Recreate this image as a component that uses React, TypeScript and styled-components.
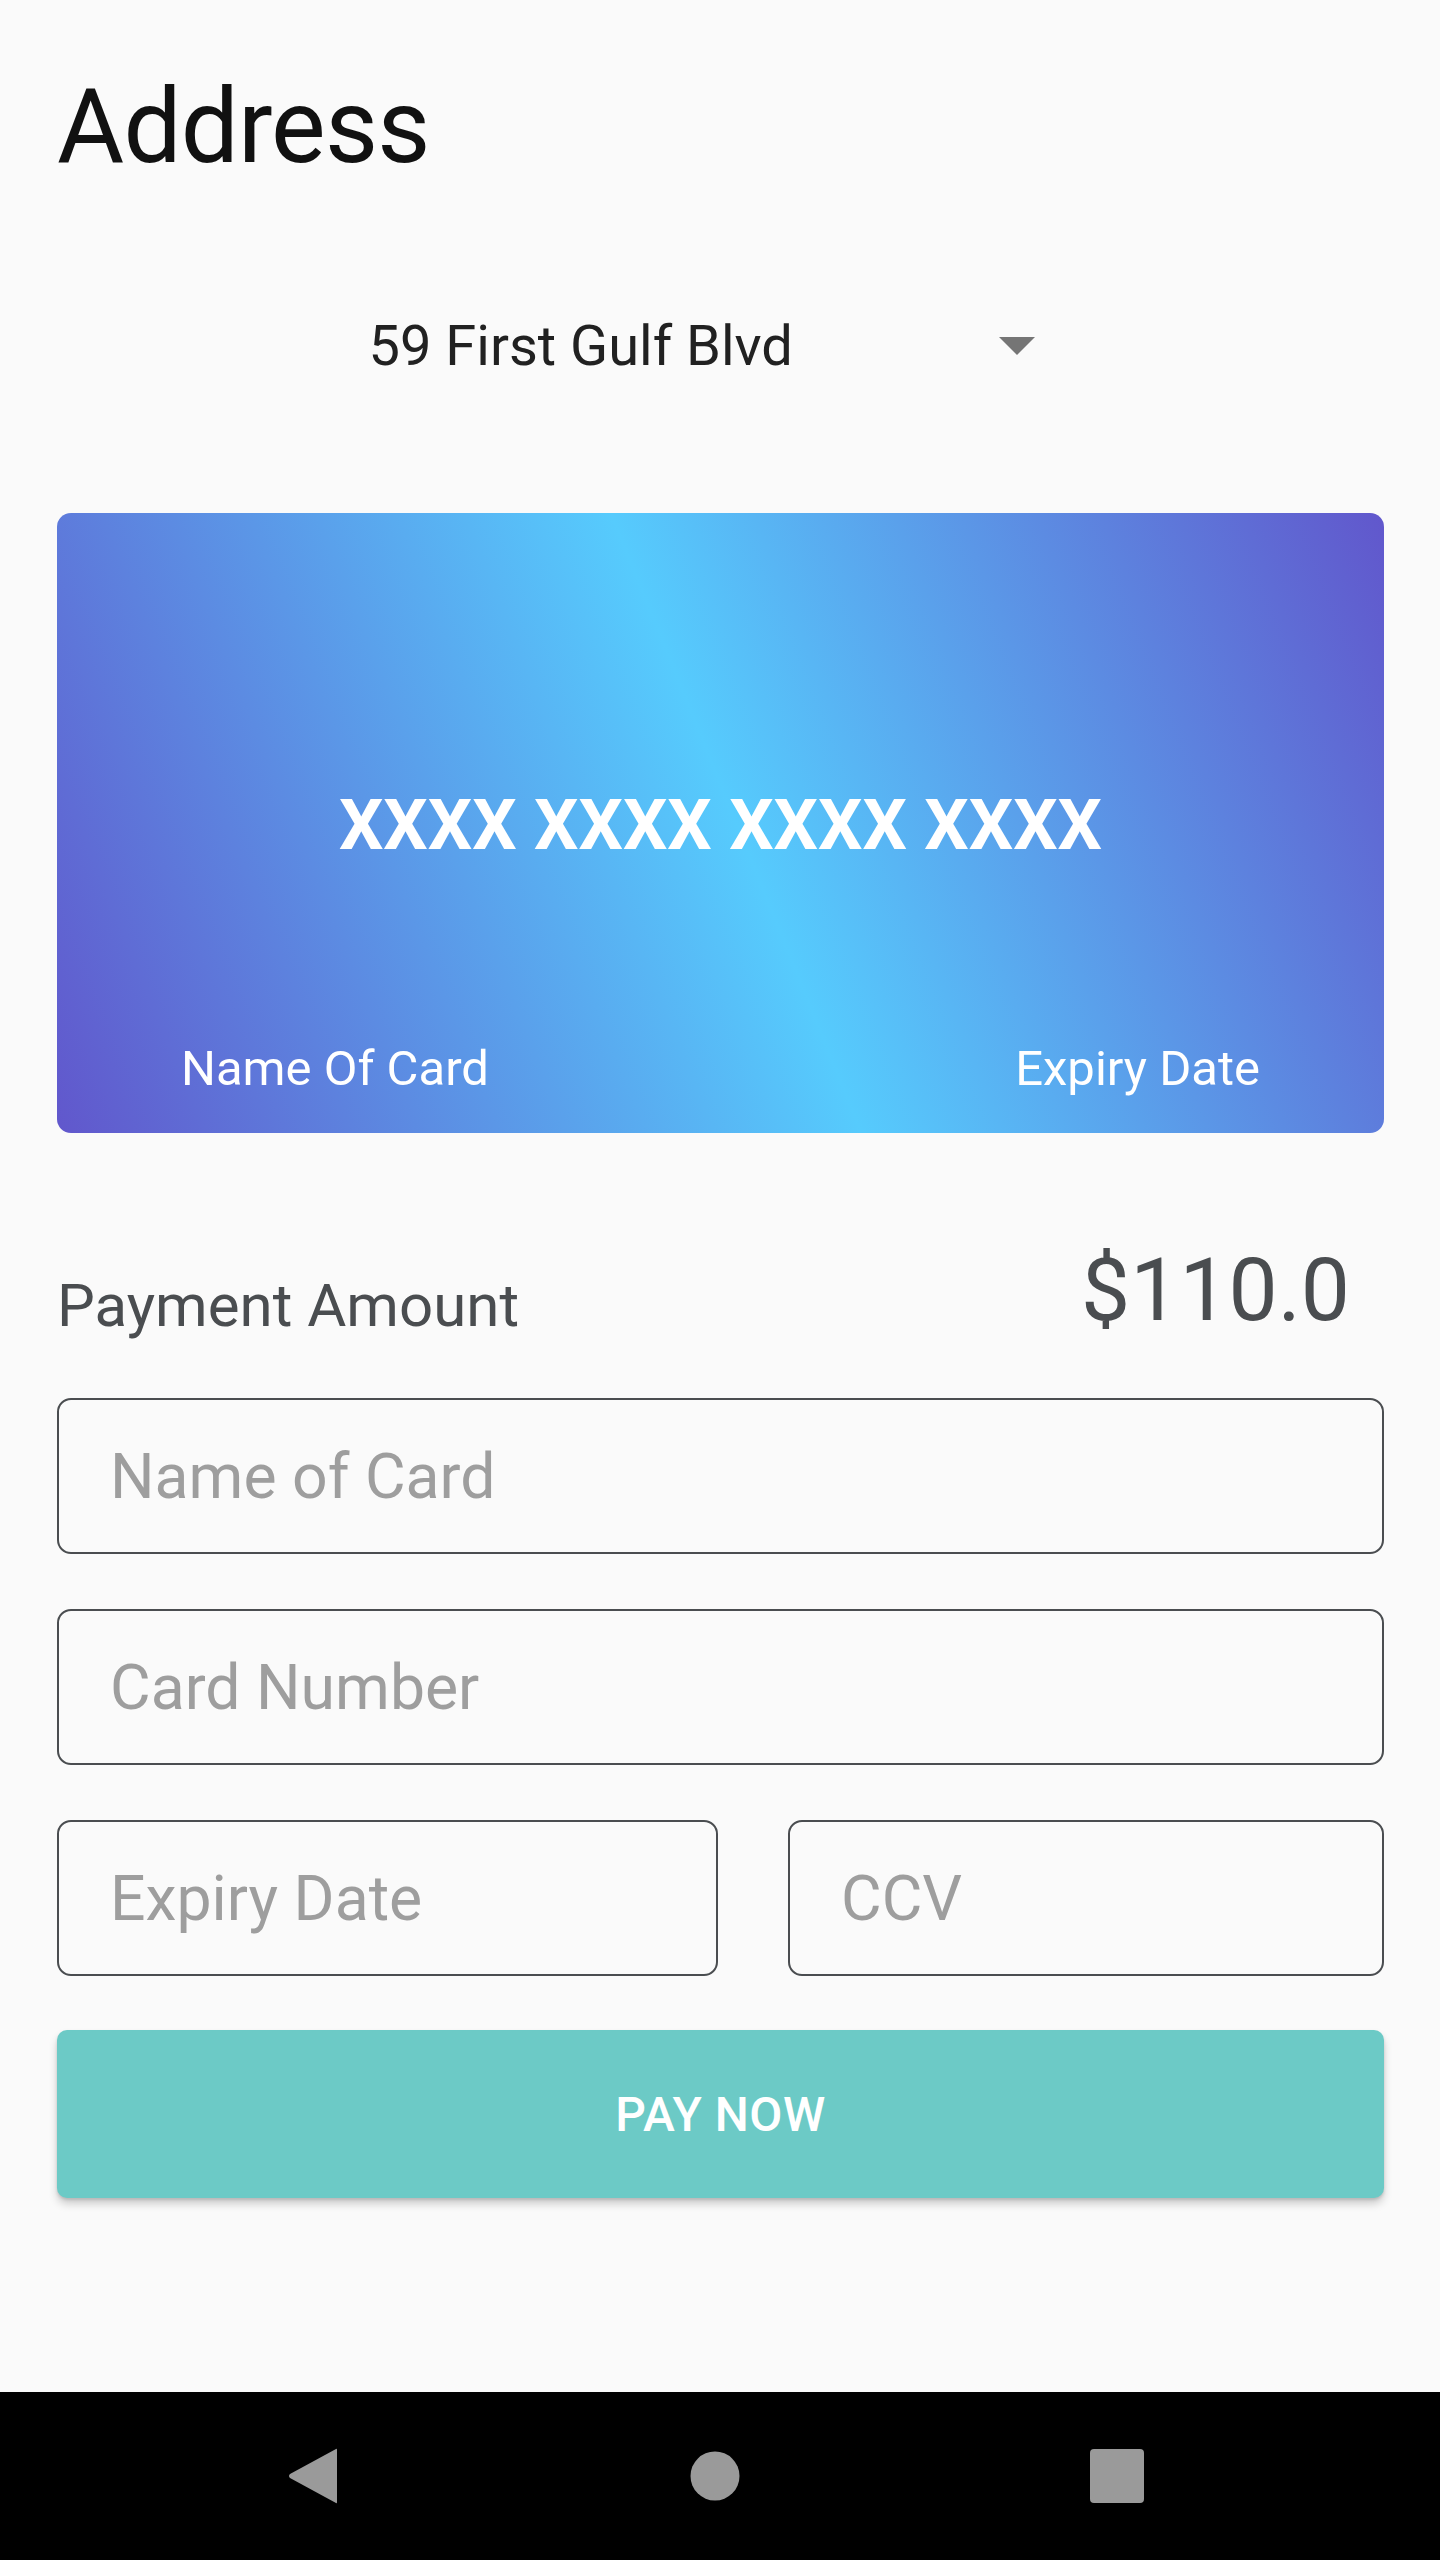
import React from "react";
import styled, { createGlobalStyle } from "styled-components";

const GlobalStyle = createGlobalStyle`
  html, body {
    margin: 0;
    padding: 0;
    background: #fafafa;
  }
  body {
    font-family: Roboto, "Noto Sans", "Liberation Sans", sans-serif;
  }
  * { box-sizing: border-box; }
`;

const Screen = styled.div`
  width: 1440px;
  height: 2560px;
  background: #fafafa;
  display: flex;
  flex-direction: column;
  overflow: hidden;
`;

const Content = styled.main`
  flex: 1;
  display: flex;
  flex-direction: column;
  padding: 65px 56px 0 57px;
`;

const Title = styled.h1`
  margin: 0;
  font-family: Roboto, sans-serif;
  font-weight: 400;
  font-size: 103px;
  line-height: 123px;
  color: #111111;
  letter-spacing: -0.8px;
`;

const Dropdown = styled.div`
  align-self: center;
  width: 690px;
  height: 80px;
  margin: 118px 0 0 -14px;
  display: flex;
  align-items: center;
  justify-content: space-between;
  cursor: pointer;
`;

const DropdownValue = styled.span`
  font-size: 56px;
  line-height: 80px;
  color: #212121;
`;

const ArrowBox = styled.span`
  width: 84px;
  height: 84px;
  display: flex;
  align-items: center;
  justify-content: center;
`;

const Card = styled.section`
  margin-top: 127px;
  height: 620px;
  border-radius: 14px;
  background: linear-gradient(68deg, #6157cc 0%, #56cbfd 51%, #6157cc 100%);
  display: grid;
  grid-template-rows: 1fr auto 1fr;
  padding: 40px 124px 36px 124px;
  color: #ffffff;
`;

const CardNumber = styled.div`
  grid-row: 2;
  text-align: center;
  font-weight: 700;
  font-size: 70px;
  line-height: 82px;
`;

const CardFooter = styled.div`
  grid-row: 3;
  align-self: end;
  display: flex;
  justify-content: space-between;
  font-size: 49px;
  line-height: 57px;
`;

const AmountRow = styled.div`
  margin-top: 106px;
  display: flex;
  align-items: flex-end;
  justify-content: space-between;
  padding-right: 34px;
  color: #4a4d50;
`;

const AmountLabel = styled.span`
  font-size: 60px;
  line-height: normal;
`;

const AmountValue = styled.span`
  font-size: 87.5px;
  line-height: normal;
`;

const Form = styled.form`
  margin-top: 57px;
  display: flex;
  flex-direction: column;
  gap: 55px;
`;

const FieldRow = styled.div`
  display: grid;
  grid-template-columns: 661fr 596fr;
  column-gap: 70px;
`;

const Field = styled.input`
  width: 100%;
  height: 156px;
  border: 2px solid #4a4d50;
  border-radius: 14px;
  background: transparent;
  padding: 0 51px;
  font-family: Roboto, sans-serif;
  font-size: 62.5px;
  color: #212121;
  outline: none;
  &::placeholder {
    color: #9e9e9e;
  }
`;

const PayButton = styled.button`
  margin-top: -1px;
  height: 168px;
  border: none;
  border-radius: 10px;
  background: #6ccac6;
  color: #ffffff;
  font-family: Roboto, sans-serif;
  font-weight: 500;
  font-size: 48px;
  letter-spacing: 0.5px;
  text-transform: uppercase;
  box-shadow: 0 6px 8px rgba(0, 0, 0, 0.18), 0 2px 3px rgba(0, 0, 0, 0.12);
  cursor: pointer;
`;

const NavBar = styled.nav`
  height: 168px;
  background: #000000;
  display: grid;
  grid-template-columns: repeat(3, 1fr);
  align-items: center;
  justify-items: center;
  padding: 0 122px 0 112px;
`;

const NavButton = styled.span`
  width: 84px;
  height: 84px;
  display: flex;
  align-items: center;
  justify-content: center;
`;

export default function App() {
  return (
    <>
      <GlobalStyle />
      <Screen>
        <Content>
          <Title>Address</Title>
          <Dropdown>
            <DropdownValue>59 First Gulf Blvd</DropdownValue>
            <ArrowBox>
              <svg width="36" height="18" viewBox="0 0 36 18">
                <path d="M0 0 L36 0 L18 18 Z" fill="#757575" />
              </svg>
            </ArrowBox>
          </Dropdown>

          <Card>
            <CardNumber>XXXX XXXX XXXX XXXX</CardNumber>
            <CardFooter>
              <span>Name Of Card</span>
              <span>Expiry Date</span>
            </CardFooter>
          </Card>

          <AmountRow>
            <AmountLabel>Payment Amount</AmountLabel>
            <AmountValue>$110.0</AmountValue>
          </AmountRow>

          <Form onSubmit={(e) => e.preventDefault()}>
            <Field placeholder="Name of Card" />
            <Field placeholder="Card Number" />
            <FieldRow>
              <Field placeholder="Expiry Date" />
              <Field placeholder="CCV" />
            </FieldRow>
            <PayButton type="submit">Pay Now</PayButton>
          </Form>
        </Content>

        <NavBar>
          <NavButton>
            <svg width="52" height="58" viewBox="0 0 52 58">
              <path
                d="M49 2 Q50 1 50 3 L50 55 Q50 57 49 56 L3 31 Q1 29 3 27 Z"
                fill="#9a9a9a"
              />
            </svg>
          </NavButton>
          <NavButton>
            <svg width="50" height="50" viewBox="0 0 50 50">
              <circle cx="25" cy="25" r="24.5" fill="#9a9a9a" />
            </svg>
          </NavButton>
          <NavButton>
            <svg width="54" height="54" viewBox="0 0 54 54">
              <rect x="0" y="0" width="54" height="54" rx="4" fill="#9a9a9a" />
            </svg>
          </NavButton>
        </NavBar>
      </Screen>
    </>
  );
}
